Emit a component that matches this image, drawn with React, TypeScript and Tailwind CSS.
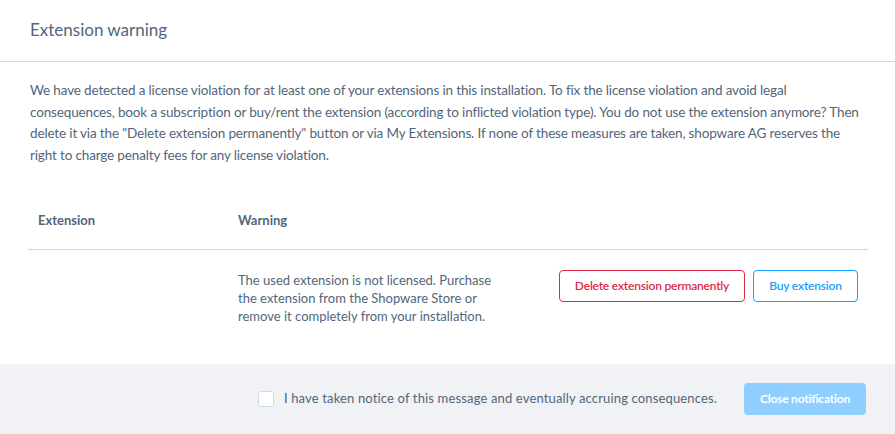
export default function App() {
  return (
    <div
      className="w-[895px] h-[434px] bg-white flex flex-col text-[#52667a]"
      style={{ fontFamily: "Lato, 'Noto Sans', sans-serif" }}
    >
      {/* Header */}
      <div className="h-[62px] border-b border-[#d1d9e0] flex items-center px-[30px] shrink-0">
        <h1 className="text-[17px] text-[#52667a] pb-[2px]">Extension warning</h1>
      </div>

      {/* Body */}
      <div className="flex-1 px-[28px] pt-[18px]">
        <p className="w-[850px] pl-[2px] text-[13.5px] tracking-[-0.15px] leading-[21.5px] whitespace-nowrap">
          We have detected a license violation for at least one of your extensions in this installation. To fix the license violation and avoid legal
          <br />
          consequences, book a subscription or buy/rent the extension (according to inflicted violation type). You do not use the extension anymore? Then
          <br />
          delete it via the "Delete extension permanently" button or via My Extensions. If none of these measures are taken, shopware AG reserves the
          <br />
          right to charge penalty fees for any license violation.
        </p>

        <div className="mt-[27px] w-[840px]">
          <div className="flex h-[57px] items-center border-b border-[#d1d9e0] text-[13px] font-bold">
            <div className="w-[200px] pl-[10px]">Extension</div>
            <div className="flex-1 pl-[10px]">Warning</div>
          </div>
          <div className="flex items-start pt-[20px]">
            <div className="w-[200px]" />
            <div className="w-[275px] pl-[10px] text-[13px] leading-[18px] pt-[1px]">
              The used extension is not licensed. Purchase the extension from the Shopware Store or remove it completely from your installation.
            </div>
            <div className="flex gap-[8px] ml-[56px]">
              <button className="h-[32px] w-[186px] border border-[#de294c] rounded-[4px] text-[12px] font-semibold text-[#de294c] bg-white tracking-[-0.2px]">
                Delete extension permanently
              </button>
              <button className="h-[32px] w-[105px] border border-[#189eff] rounded-[4px] text-[12px] font-semibold text-[#189eff] bg-white tracking-[-0.2px]">
                Buy extension
              </button>
            </div>
          </div>
        </div>
      </div>

      {/* Footer */}
      <div className="h-[70px] bg-[#f0f2f5] flex items-center justify-end pr-[29px] shrink-0">
        <div className="flex items-center">
          <span className="w-[16px] h-[16px] border border-[#d1d9e0] rounded-[3px] bg-white" />
          <span className="ml-[10px] text-[13px] tracking-[0.15px]">
            I have taken notice of this message and eventually accruing consequences.
          </span>
        </div>
        <button className="ml-[27px] h-[32px] w-[122px] rounded-[4px] bg-[#8fcfff] text-white text-[12px] font-bold tracking-[-0.2px]">
          Close notification
        </button>
      </div>
    </div>
  );
}
